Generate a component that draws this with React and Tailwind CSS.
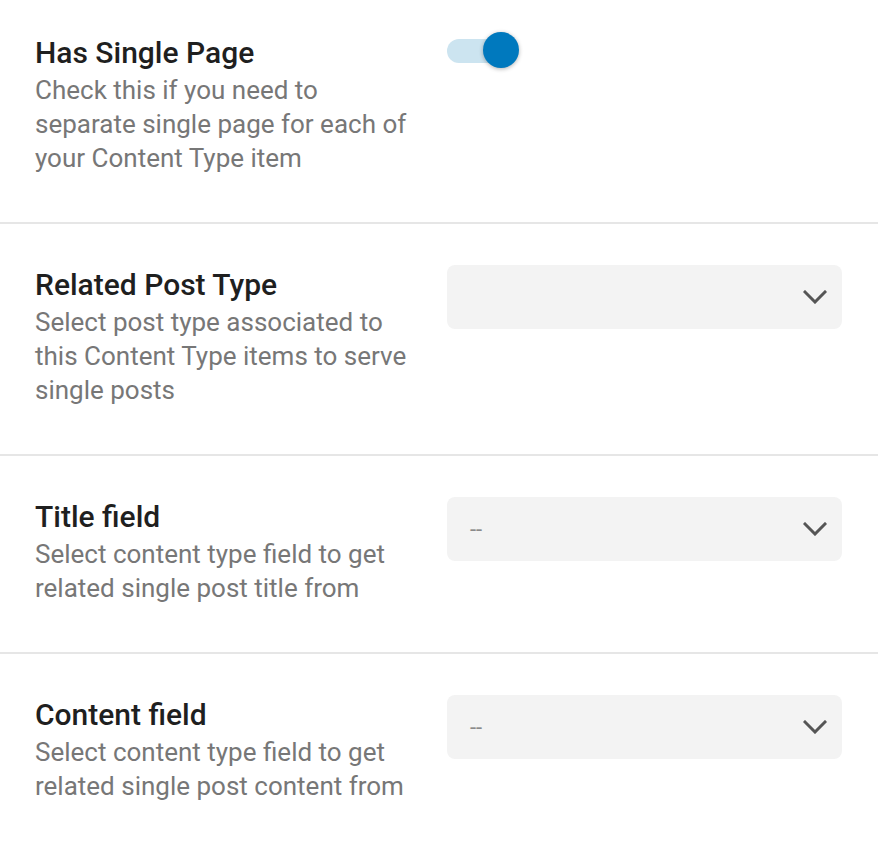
import { useState } from "react";

const Chevron = () => (
  <svg width="24" height="14" viewBox="0 0 24 14" fill="none">
    <path d="M2 2l10 10L22 2" stroke="#555" strokeWidth="3" strokeLinecap="square" />
  </svg>
);

const Select = ({ value }) => (
  <div className="flex h-[64px] items-center justify-between rounded-lg bg-[#f3f3f3] pl-[23px] pr-[15px]">
    <span className="text-[22px] text-[#8a8a8a]">{value}</span>
    <Chevron />
  </div>
);

const Toggle = ({ on, onChange }) => (
  <button onClick={() => onChange(!on)} className="relative mt-[-1px] h-[38px] w-[74px]">
    <span className="absolute left-0 top-[7px] h-[24px] w-[58px] rounded-full bg-[#cce4f0]" />
    <span
      className={
        "absolute top-0 h-[36px] w-[36px] rounded-full shadow-[0_1px_4px_rgba(0,0,0,0.3)] " +
        (on ? "left-[36px] bg-[#0079be]" : "left-[-4px] bg-white")
      }
    />
  </button>
);

const Row = ({ title, desc, first, last, children }) => (
  <div
    className={
      "flex gap-[31px] pl-[35px] pr-[36px] pb-[47px] " +
      (first ? "pt-[33px] " : "pt-[41px] ") +
      (last ? "" : "border-b-2 border-[#e6e6e6]")
    }
  >
    <div className="w-[381px] shrink-0">
      <h2 className="text-[30px] font-medium leading-[40px] text-[#1f1f1f]">{title}</h2>
      <p className="text-[26px] leading-[34px] text-[#777]">{desc}</p>
    </div>
    <div className="w-[395px]">{children}</div>
  </div>
);

export default function App() {
  const [single, setSingle] = useState(true);
  return (
    <div className="h-[842px] overflow-hidden bg-white" style={{ fontFamily: "Roboto, sans-serif" }}>
      <Row
        first
        title="Has Single Page"
        desc="Check this if you need to separate single page for each of your Content Type item"
      >
        <Toggle on={single} onChange={setSingle} />
      </Row>
      <Row
        title="Related Post Type"
        desc="Select post type associated to this Content Type items to serve single posts"
      >
        <Select value="" />
      </Row>
      <Row title="Title field" desc="Select content type field to get related single post title from">
        <Select value="--" />
      </Row>
      <Row last title="Content field" desc="Select content type field to get related single post content from">
        <Select value="--" />
      </Row>
    </div>
  );
}
